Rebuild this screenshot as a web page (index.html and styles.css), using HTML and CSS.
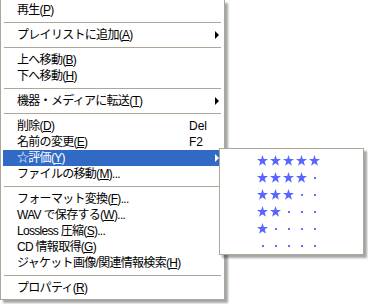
FILE: index.html
```html
<!DOCTYPE html>
<html lang="ja">
<head>
    <meta charset="UTF-8">
    <title>メニュー</title>
    <link rel="stylesheet" href="styles.css">
</head>
<body>

<div class="stage">
    <!-- メインメニュー -->
    <div class="menu">
        <div class="item">再生(<u>P</u>)</div>
        <div class="sep"></div>
        <div class="item sub">プレイリストに追加(<u>A</u>)</div>
        <div class="sep"></div>
        <div class="item">上へ移動(<u>B</u>)</div>
        <div class="item">下へ移動(<u>H</u>)</div>
        <div class="sep"></div>
        <div class="item sub">機器・メディアに転送(<u>T</u>)</div>
        <div class="sep"></div>
        <div class="item">削除(<u>D</u>)<span class="key">Del</span></div>
        <div class="item">名前の変更(<u>E</u>)<span class="key">F2</span></div>
        <div class="item sub active">☆評価(<u>Y</u>)</div>
        <div class="item">ファイルの移動(<u>M</u>)...</div>
        <div class="sep"></div>
        <div class="item">フォーマット変換(<u>F</u>)...</div>
        <div class="item">WAV で保存する(<u>W</u>)...</div>
        <div class="item">Lossless 圧縮(<u>S</u>)...</div>
        <div class="item">CD 情報取得(<u>G</u>)</div>
        <div class="item">ジャケット画像/関連情報検索(<u>H</u>)</div>
        <div class="sep"></div>
        <div class="item">プロパティ(<u>R</u>)</div>
    </div>

    <!-- 評価サブメニュー -->
    <div class="submenu" id="rating"></div>
</div>

<script>
    // 星の行を作る (5 から 0 まで)
    const rating = document.getElementById('rating');
    const star = '<svg width="11" height="11" viewBox="0 0 10 10"><polygon points="5,0 6.2,3.6 10,3.7 7,6 8.1,9.7 5,7.6 1.9,9.7 3,6 0,3.7 3.8,3.6" fill="#5866ff"/></svg>';

    for (let n = 5; n >= 0; n--) {
        const row = document.createElement('div');
        row.className = 'stars';
        for (let i = 0; i < 5; i++) {
            const cell = document.createElement('span');
            cell.className = 'cell';
            cell.innerHTML = i < n ? star : '<span class="dot"></span>';
            row.appendChild(cell);
        }
        rating.appendChild(row);
    }
</script>

</body>
</html>
```

FILE: styles.css
```css
/* 全体 */
body {
    margin: 0;
    background: #fff;
    font-family: "Liberation Sans", "Noto Sans CJK JP", sans-serif;
    font-size: 12px;
    color: #000;
}

.stage {
    position: relative;
    width: 368px;
    height: 304px;
    overflow: hidden;
}

/* メインメニュー */
.menu {
    width: 225px;
    box-sizing: border-box;
    background: #fff;
    border: 1px solid #aca899;
    border-top: none;
    padding: 2px 2px 3px 2px;
    box-shadow: 3px 3px 2px rgba(0, 0, 0, 0.35);
}

.item {
    display: flex;
    align-items: center;
    height: 16px;
    line-height: 16px;
    padding-left: 14px;
    white-space: nowrap;
    letter-spacing: -0.7px;
}

.item u {
    text-decoration: underline;
}

.key {
    margin-left: auto;
    width: 33px;
    letter-spacing: 0;
}

.sub::after {
    content: "";
    margin-left: auto;
    margin-right: 3px;
    border-left: 4px solid #000;
    border-top: 4px solid transparent;
    border-bottom: 4px solid transparent;
}

.active {
    background: #316ac5;
    color: #fff;
}

.active::after {
    border-left-color: #fff;
}

.sep {
    height: 9px;
    margin: 0 1px;
    background: linear-gradient(#aca899, #aca899) no-repeat 0 4px / 100% 1px;
}

/* 評価サブメニュー */
.submenu {
    position: absolute;
    left: 219px;
    top: 148px;
    width: 145px;
    height: 107px;
    box-sizing: border-box;
    background: #fff;
    border: 1px solid #aca899;
    padding: 3px 0 0 36px;
    box-shadow: 3px 3px 2px rgba(0, 0, 0, 0.35);
}

.stars {
    display: flex;
    height: 17px;
}

.cell {
    width: 13px;
    display: flex;
    align-items: center;
    justify-content: center;
}

.cell svg {
    display: block;
}

.dot {
    width: 2px;
    height: 2px;
    background: #6070ff;
}
```
